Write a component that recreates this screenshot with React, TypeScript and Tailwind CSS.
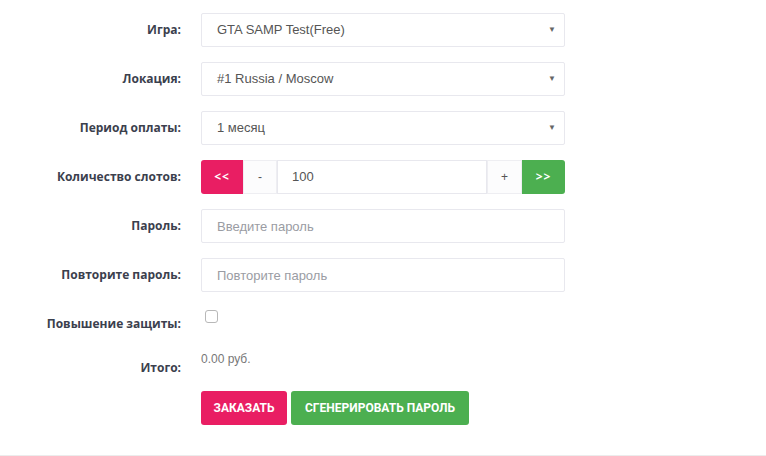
import React from "react";

const label =
  "w-[181px] shrink-0 pt-[7px] text-right text-[12px] leading-5 font-bold text-[#3b404d] [font-family:'Open_Sans',sans-serif]";
const field =
  "h-[34px] w-[364px] border border-[#e8e8ee] rounded-[2px] bg-white px-[15px] text-[13px] text-[#555] [font-family:'Liberation_Sans',Arial,sans-serif] outline-none";

function SelectRow({ title, value }: { title: string; value: string }) {
  return (
    <div className="flex gap-5 mb-[15px]">
      <div className={label}>{title}</div>
      <div className={field + " relative flex items-center"}>
        <span>{value}</span>
        <span className="absolute right-[8px] top-[10px] text-[8px] text-[#666]">▼</span>
      </div>
    </div>
  );
}

function InputRow({ title, placeholder }: { title: string; placeholder: string }) {
  return (
    <div className="flex gap-5 mb-[15px]">
      <div className={label}>{title}</div>
      <input className={field + " placeholder:text-[#9a9ca3]"} placeholder={placeholder} />
    </div>
  );
}

export default function App() {
  return (
    <div className="w-[766px] bg-white pt-[13px] pb-[30px] border-b border-[#ececec]">
      <SelectRow title="Игра:" value="GTA SAMP Test(Free)" />
      <SelectRow title="Локация:" value="#1 Russia / Moscow" />
      <SelectRow title="Период оплаты:" value="1 месяц" />

      <div className="flex gap-5 mb-[15px]">
        <div className={label}>Количество слотов:</div>
        <div className="flex h-[34px] w-[364px] text-[13px] [font-family:'Liberation_Sans',Arial,sans-serif]">
          <button className="w-[42px] rounded-l-[3px] bg-[#e91e63] text-white font-bold text-[12px] tracking-[1px] [font-family:'Open_Sans',sans-serif]">
            &lt;&lt;
          </button>
          <button className="w-[34px] border border-[#eeeef2] bg-[#fcfcfd] text-[#555] text-[12px]">-</button>
          <input
            className="w-[210px] border border-[#e8e8ee] px-[14px] text-[#555] outline-none"
            defaultValue="100"
          />
          <button className="w-[35px] border border-[#eeeef2] bg-[#fcfcfd] text-[#555] text-[12px]">+</button>
          <button className="flex-1 rounded-r-[3px] bg-[#4caf50] text-white font-bold text-[12px] tracking-[1px] [font-family:'Open_Sans',sans-serif]">
            &gt;&gt;
          </button>
        </div>
      </div>

      <InputRow title="Пароль:" placeholder="Введите пароль" />
      <InputRow title="Повторите пароль:" placeholder="Повторите пароль" />

      <div className="flex gap-5 h-[29px] mb-[15px]">
        <div className={label}>Повышение защиты:</div>
        <div className="pt-[3px] pl-[4px]">
          <div className="w-[13px] h-[13px] rounded-[3px] border border-[#b8b8b8] bg-white" />
        </div>
      </div>

      <div className="flex gap-5 h-[25px] mb-[15px]">
        <div className={label}>Итого:</div>
        <div className="pt-[1px] text-[12px] leading-[14px] text-[#777] [font-family:'Liberation_Sans',Arial,sans-serif]">
          0.00 руб.
        </div>
      </div>

      <div className="flex gap-5">
        <div className="w-[181px] shrink-0" />
        <div className="flex gap-[4px] [font-family:'Roboto',sans-serif]">
          <button className="h-[34px] w-[86px] rounded-[3px] bg-[#e91e63] text-white text-[12px] font-bold">
            ЗАКАЗАТЬ
          </button>
          <button className="h-[34px] w-[178px] rounded-[3px] bg-[#4caf50] text-white text-[12px] font-bold">
            СГЕНЕРИРОВАТЬ ПАРОЛЬ
          </button>
        </div>
      </div>
    </div>
  );
}
